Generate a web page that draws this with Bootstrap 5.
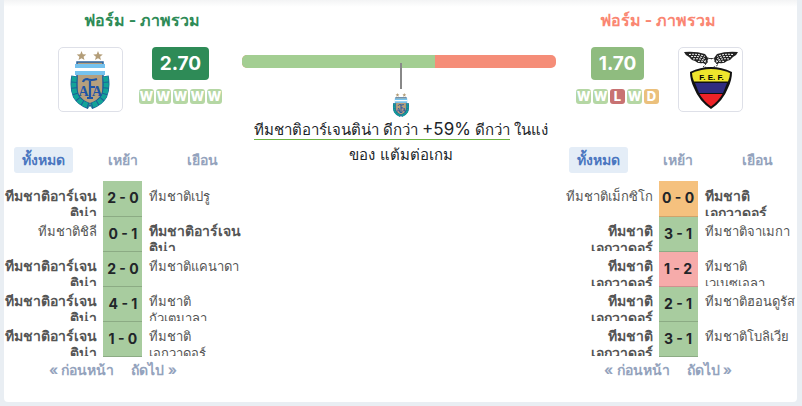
<!DOCTYPE html>
<html lang="th">
<head>
<meta charset="utf-8">
<meta name="viewport" content="width=device-width, initial-scale=1">
<title>ฟอร์ม - ภาพรวม</title>
<link href="https://cdn.jsdelivr.net/npm/bootstrap@5.3.0/dist/css/bootstrap.min.css" rel="stylesheet">
<style>
body{background:#e9eef3;font-family:Inter,"Open Sans",sans-serif;color:#212529;font-size:14px}
.panel{background:#fff;border-radius:0 0 4px 4px;margin:0 5px 4px 4px;padding-bottom:22px;background-image:linear-gradient(#f3f4f5,#fff 7px)}
.side{flex:0 0 30%;width:30%}
.middle{padding:55px 3px 0 0}
.head-home{padding-left:38px}
.head-away{padding-right:40px}
.title{font-size:16px;line-height:20px;font-weight:700;margin:0;padding-top:10px;color:#2e8b57}
.title-away{color:#fa8672}
.summary{padding-top:17px;height:111px;gap:16px}
.head-home .summary{padding-right:4px}
.head-away .summary{padding-left:3px;gap:19px}
.crest{width:65px;height:65px;border:1px solid #dee0e8;border-radius:5px}
.rating{font-size:19px;line-height:33px;font-weight:700;color:#fff;background:#2e8b57;border-radius:4px;padding:0 8px}
.rating-away{background:#8fbc7f}
.letters{gap:2px;margin-top:9px}
.res{width:15px;height:15px;border-radius:3px;color:#fff;font-size:13px;line-height:15px;font-weight:800;text-align:center;background:#b5d7a4}
.res-l{background:#c87272}
.res-d{background:#ebc07c}
.tabs{padding-top:6px;padding-bottom:8px}
.tab{border:0;background:none;border-radius:3px;font-size:14px;line-height:26px;font-weight:700;color:#94a3bd;padding:0 8px}
.tab.active{background:#e4edf7;color:#4b77c0}
.games{width:100%;table-layout:fixed;line-height:17px;color:#555}
.games td{padding:0}
.games .pt{width:39px;background:#a8cc9f;border-bottom:1px solid #8cab84;color:#212529;font-size:14px;text-align:center;font-weight:700;padding-bottom:1px}
.games .pt-d{background:#f5c17e;border-color:#cfa36b}
.games .pt-l{background:#f6abaa;border-color:#cf908f}
.team{height:35px;overflow:hidden;padding:7px 6px 0 0;text-align:right;font-size:13px}
.team.fw-bold{font-size:14px;padding-top:6px}
.team-r{padding:7px 0 0 7px;text-align:left}
.pager{gap:17px;padding:3px 20px 0 0}
.pager a{color:#94a3bd;font-weight:700;text-decoration:none;line-height:20px}
.bar{height:13px;border-radius:5px;background:#f58d78}
.bar .progress-bar{background:#a3ce92}
.advantage{padding-left:4px}
.tick{width:2px;height:26px;background:#888;margin-top:-5px;position:relative}
.note{font-size:15px;line-height:25px}
.note u{text-decoration:none;border-bottom:1px solid #6cb33f}
.note b{font-size:17px;font-weight:400;line-height:20px}
</style>
<script src="https://cdn.jsdelivr.net/npm/bootstrap@5.3.0/dist/js/bootstrap.bundle.min.js"></script>
</head>
<body>
<svg width="0" height="0" class="d-block" aria-hidden="true">
<symbol id="afa" viewBox="0 0 40 58">
<path id="star" fill="#b39d78" d="M11.500 0l1.300 3.200 3.500.3-2.700 2.200.9 3.400-3-1.900-3 1.900.9-3.400-2.700-2.200 3.500-.3z"/>
<use href="#star" x="16.500"/>
<path fill="#b59f7d" stroke="#28629e" stroke-width="1.500" d="M7 11h26v34q-5 7-13 10Q12 52 7 45z"/>
<path fill="#75c2ee" d="M5 13h30v11H5z"/><path fill="#fff" d="M5 17h30v3H5z"/>
<path fill="none" stroke="#1c5e98" stroke-width="6.500" d="M4.500 25q-2 12 1.500 20 4 7 13 10M35.500 25q2 12-1.500 20-4 7-13 10"/>
<path fill="none" stroke="#12a398" stroke-width="5" stroke-dasharray="5 1" d="M4.500 25.500q-2 12 1.500 20 4 7 13 9M35.500 25.500q2 12-1.500 20-4 7-13 9"/>
<g fill="#1d54a5" font-family="Liberation Serif,serif" font-weight="700" text-anchor="middle"><text x="13.500" y="45" font-size="14">A</text><text x="27" y="45" font-size="14">A</text></g>
<path fill="none" stroke="#1d54a5" stroke-width="2.200" d="M13 31q1-3 4-3 4 2 10 0M20 28v19M17 47h6M20 36h5"/>
</symbol>
<symbol id="fef" viewBox="0 0 56 58">
<path fill="#222" d="M1 1q12-1 21 2l3 4h6l3-4q9-3 21-2-1 3-5 5-2 3-6 4-3 3-8 2-3 3-7 3-5 0-9-3-5 1-8-2-4-1-6-4-4-2-5-5z"/>
<path fill="none" stroke="#fff" stroke-width="1" stroke-dasharray="2 1" d="M6 3.500q9-1 16 2M8 5.700q8-1 14 2M10 8q7-1 13 2M15 10.500q5-1 9 1M50 3.500q-9-1-16 2M48 5.700q-8-1-14 2M46 8q-7-1-13 2M41 10.500q-5-1-9 1"/>
<path fill="#fff" stroke="#222" stroke-width=".8" stroke-dasharray="2 1" d="M25 7l3 1 3-1 1 4 3 3-6 3-9-1 4-4z"/>
<path fill="#111" d="M7 21Q28 11 49 21q0 8-4 16-5 13-17 21Q16 50 11 37 7 29 7 21z"/>
<path fill="#efe52d" d="M9 22q19-8 38 0 0 4-2 8.500H11q-2-4.500-2-8.500z"/><path fill="#302c80" d="M12 32h32l-4 10H16z"/><path fill="#ee2227" d="M16.500 43h23q-4 7-11.500 12.500Q20.500 50 16.500 43z"/>
<text x="28.500" y="29" text-anchor="middle" font-family="Liberation Sans,sans-serif" font-weight="700" font-size="8">F. E. F.</text>
</symbol>
</svg>
<main class="panel d-flex">
<section class="side">
<div class="head-home"><h2 class="title text-center">ฟอร์ม - ภาพรวม</h2>
<div class="summary d-flex justify-content-center">
<div class="crest d-flex align-items-center justify-content-center"><svg width="40" height="58" role="img" aria-label="อาร์เจนติน่า"><use href="#afa"/></svg></div>
<div class="d-flex flex-column align-items-center"><div class="rating">2.70</div><div class="letters d-flex"><span class="res">W</span><span class="res">W</span><span class="res">W</span><span class="res">W</span><span class="res">W</span></div></div>
</div></div>
<div class="tabs row g-0 text-center"><div class="col"><button class="tab active">ทั้งหมด</button></div><div class="col"><button class="tab">เหย้า</button></div><div class="col"><button class="tab">เยือน</button></div></div>
<table class="games">
<tr><td><div class="team fw-bold">ทีมชาติอาร์เจนติน่า</div></td><td class="pt">2 - 0</td><td><div class="team team-r">ทีมชาติเปรู</div></td></tr>
<tr><td><div class="team">ทีมชาติชิลี</div></td><td class="pt">0 - 1</td><td><div class="team team-r fw-bold">ทีมชาติอาร์เจนติน่า</div></td></tr>
<tr><td><div class="team fw-bold">ทีมชาติอาร์เจนติน่า</div></td><td class="pt">2 - 0</td><td><div class="team team-r">ทีมชาติแคนาดา</div></td></tr>
<tr><td><div class="team fw-bold">ทีมชาติอาร์เจนติน่า</div></td><td class="pt">4 - 1</td><td><div class="team team-r">ทีมชาติกัวเตมาลา</div></td></tr>
<tr><td><div class="team fw-bold">ทีมชาติอาร์เจนติน่า</div></td><td class="pt">1 - 0</td><td><div class="team team-r">ทีมชาติเอกวาดอร์</div></td></tr>
</table>
<nav class="pager d-flex justify-content-center"><a href="#">« ก่อนหน้า</a><a href="#">ถัดไป »</a></nav>
</section>
<section class="middle flex-fill">
<div class="bar progress"><div class="progress-bar" style="width:61.4%"></div></div>
<div class="advantage d-flex flex-column align-items-center">
<div class="tick"></div>
<svg width="20" height="24" class="mt-1" role="img" aria-label="อาร์เจนติน่า"><use href="#afa"/></svg>
<p class="note text-center mb-0"><u>ทีมชาติอาร์เจนติน่า ดีกว่า <b>+59%</b> ดีกว่า</u> ในแง่<wbr>ของ แต้มต่อเกม</p>
</div>
</section>
<section class="side">
<div class="head-away"><h2 class="title title-away text-center">ฟอร์ม - ภาพรวม</h2>
<div class="summary d-flex justify-content-center">
<div class="d-flex flex-column align-items-center"><div class="rating rating-away">1.70</div><div class="letters d-flex"><span class="res">W</span><span class="res">W</span><span class="res res-l">L</span><span class="res">W</span><span class="res res-d">D</span></div></div>
<div class="crest d-flex align-items-center justify-content-center"><svg width="56" height="58" role="img" aria-label="เอกวาดอร์"><use href="#fef"/></svg></div>
</div></div>
<div class="tabs row g-0 text-center"><div class="col"><button class="tab active">ทั้งหมด</button></div><div class="col"><button class="tab">เหย้า</button></div><div class="col"><button class="tab">เยือน</button></div></div>
<table class="games">
<tr><td><div class="team">ทีมชาติเม็กซิโก</div></td><td class="pt pt-d">0 - 0</td><td><div class="team team-r fw-bold">ทีมชาติเอกวาดอร์</div></td></tr>
<tr><td><div class="team fw-bold">ทีมชาติเอกวาดอร์</div></td><td class="pt">3 - 1</td><td><div class="team team-r">ทีมชาติจาเมกา</div></td></tr>
<tr><td><div class="team fw-bold">ทีมชาติเอกวาดอร์</div></td><td class="pt pt-l">1 - 2</td><td><div class="team team-r">ทีมชาติเวเนซุเอลา</div></td></tr>
<tr><td><div class="team fw-bold">ทีมชาติเอกวาดอร์</div></td><td class="pt">2 - 1</td><td><div class="team team-r">ทีมชาติฮอนดูรัส</div></td></tr>
<tr><td><div class="team fw-bold">ทีมชาติเอกวาดอร์</div></td><td class="pt">3 - 1</td><td><div class="team team-r">ทีมชาติโบลิเวีย</div></td></tr>
</table>
<nav class="pager d-flex justify-content-center"><a href="#">« ก่อนหน้า</a><a href="#">ถัดไป »</a></nav>
</section>
</main>
</body>
</html>
